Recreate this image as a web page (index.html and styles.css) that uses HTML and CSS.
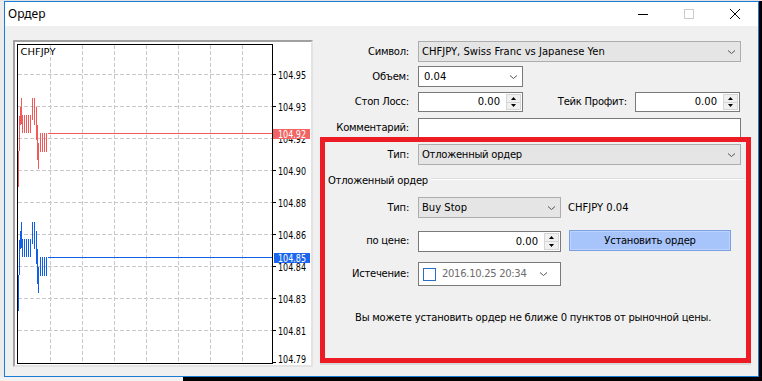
FILE: index.html
```html
<!DOCTYPE html>
<html lang="ru">
<head>
<meta charset="utf-8">
<title>Ордер</title>
<link rel="stylesheet" href="styles.css">
</head>
<body>
<div class="win">
  <div class="titlebar">
    <span class="title">Ордер</span>
    <div class="caps">
      <span class="cap"><svg width="10" height="10" viewBox="0 0 10 10"><path d="M0 5.5H10" stroke="#000" stroke-width="1"/></svg></span>
      <span class="cap"><svg width="10" height="10" viewBox="0 0 10 10"><rect x="0.5" y="0.5" width="9" height="9" fill="none" stroke="#cccccc"/></svg></span>
      <span class="cap"><svg width="10" height="10" viewBox="0 0 10 10"><path d="M0 0L10 10M10 0L0 10" stroke="#000" stroke-width="1"/></svg></span>
    </div>
  </div>
  <div class="client">
    <div class="chart">
      <svg width="296" height="323" viewBox="0 0 296 323" shape-rendering="crispEdges">
        <g stroke="#c8c8c8" stroke-dasharray="4 2" stroke-width="1">
          <path d="M35.5 3V321M67.5 3V321M99.5 3V321M131.5 3V321M163.5 3V321M195.5 3V321M227.5 3V321"/>
          <path d="M3 32.5H257M3 64.5H257M3 96.5H257M3 128.5H257M3 160.5H257M3 192.5H257M3 224.5H257M3 256.5H257M3 288.5H257"/>
        </g>
        <rect x="2.5" y="2.5" width="255" height="319" fill="none" stroke="#000"/>
        <path d="M257 32.5H261M257 64.5H261M257 96.5H261M257 128.5H261M257 160.5H261M257 192.5H261M257 224.5H261M257 256.5H261M257 288.5H261M257 320.5H261" stroke="#000"/>
        <text x="5.5" y="13" class="sym" textLength="35" lengthAdjust="spacingAndGlyphs">CHFJPY</text>
        <g class="ax">
          <text x="263" y="36.5" textLength="28" lengthAdjust="spacingAndGlyphs">104.95</text>
          <text x="263" y="68.5" textLength="28" lengthAdjust="spacingAndGlyphs">104.93</text>
          <text x="263" y="100.5" textLength="28" lengthAdjust="spacingAndGlyphs">104.92</text>
          <text x="263" y="132.5" textLength="28" lengthAdjust="spacingAndGlyphs">104.90</text>
          <text x="263" y="164.5" textLength="28" lengthAdjust="spacingAndGlyphs">104.88</text>
          <text x="263" y="196.5" textLength="28" lengthAdjust="spacingAndGlyphs">104.86</text>
          <text x="263" y="228.5" textLength="28" lengthAdjust="spacingAndGlyphs">104.84</text>
          <text x="263" y="260.5" textLength="28" lengthAdjust="spacingAndGlyphs">104.83</text>
          <text x="263" y="292.5" textLength="28" lengthAdjust="spacingAndGlyphs">104.81</text>
          <text x="263" y="321" textLength="28" lengthAdjust="spacingAndGlyphs">104.79</text>
        </g>
        <path d="M33 91.5H257" stroke="#f25a5a" stroke-width="1"/>
        <path d="M33 215.5H257" stroke="#0f5fe8" stroke-width="1"/>
        <path d="M3.5 109V145M4.5 74V109M5.5 65V83M6.5 56V82M7.5 73V91M9.5 73V91M11.5 73V91M13.5 73V91M15.5 73V91M17.5 56V78M19.5 56V83M21.5 65V98M22.5 83V118M23.5 101V127M25.5 91V110M27.5 91V110M29.5 91V110M31.5 91V110" stroke="#f25a5a" fill="none"/>
        <g transform="translate(0 124)">
          <path d="M3.5 109V145M4.5 74V109M5.5 65V83M6.5 56V82M7.5 73V91M9.5 73V91M11.5 73V91M13.5 73V91M15.5 73V91M17.5 56V78M19.5 56V83M21.5 65V98M22.5 83V118M23.5 101V127M25.5 91V110M27.5 91V110M29.5 91V110M31.5 91V110" stroke="#0f5fe8" fill="none"/>
        </g>
        <rect x="258" y="87" width="37" height="10" fill="#f26464"/>
        <text x="263" y="95.5" class="tagt" textLength="28" lengthAdjust="spacingAndGlyphs">104.92</text>
        <rect x="259" y="211" width="36" height="10" fill="#1a66ee"/>
        <text x="263" y="219.5" class="tagt" textLength="28" lengthAdjust="spacingAndGlyphs">104.85</text>
      </svg>
    </div>
    <div class="form">
      <div class="row r1">
        <span class="lbl">Символ:</span>
        <div class="combo wide"><span>CHFJPY, Swiss Franc vs Japanese Yen</span><svg class="chev" width="7" height="4" viewBox="0 0 7 4"><path d="M0 0.5L3.5 3.5L7 0.5" fill="none" stroke="#555"/></svg></div>
      </div>
      <div class="row r2">
        <span class="lbl">Объем:</span>
        <div class="combo edit short"><span>0.04</span><svg class="chev" width="7" height="4" viewBox="0 0 7 4"><path d="M0 0.5L3.5 3.5L7 0.5" fill="none" stroke="#555"/></svg></div>
      </div>
      <div class="row r3">
        <span class="lbl">Стоп Лосс:</span>
        <div class="spin short"><span class="val">0.00</span><span class="spinbtns"><span class="sb"><svg width="5" height="3" viewBox="0 0 5 3"><path d="M2.5 0L5 3H0Z"/></svg></span><span class="sb"><svg width="5" height="3" viewBox="0 0 5 3"><path d="M0 0H5L2.5 3Z"/></svg></span></span></div>
        <span class="lbl2">Тейк Профит:</span>
        <div class="spin short tp"><span class="val">0.00</span><span class="spinbtns"><span class="sb"><svg width="5" height="3" viewBox="0 0 5 3"><path d="M2.5 0L5 3H0Z"/></svg></span><span class="sb"><svg width="5" height="3" viewBox="0 0 5 3"><path d="M0 0H5L2.5 3Z"/></svg></span></span></div>
      </div>
      <div class="row r4">
        <span class="lbl">Комментарий:</span>
        <div class="text wide"></div>
      </div>
      <div class="row r5">
        <span class="lbl">Тип:</span>
        <div class="combo wide"><span class="cyr">Отложенный ордер</span><svg class="chev" width="7" height="4" viewBox="0 0 7 4"><path d="M0 0.5L3.5 3.5L7 0.5" fill="none" stroke="#555"/></svg></div>
      </div>
      <div class="group"><span class="gtitle">Отложенный ордер</span><span class="gline"></span></div>
      <div class="row r6">
        <span class="lbl">Тип:</span>
        <div class="combo mid"><span>Buy Stop</span><svg class="chev" width="7" height="4" viewBox="0 0 7 4"><path d="M0 0.5L3.5 3.5L7 0.5" fill="none" stroke="#555"/></svg></div>
        <span class="info">CHFJPY 0.04</span>
      </div>
      <div class="row r7">
        <span class="lbl">по цене:</span>
        <div class="spin mid"><span class="val">0.00</span><span class="spinbtns"><span class="sb"><svg width="5" height="3" viewBox="0 0 5 3"><path d="M2.5 0L5 3H0Z"/></svg></span><span class="sb"><svg width="5" height="3" viewBox="0 0 5 3"><path d="M0 0H5L2.5 3Z"/></svg></span></span></div>
        <button class="btn" type="button">Установить ордер</button>
      </div>
      <div class="row r8">
        <span class="lbl">Истечение:</span>
        <div class="date mid"><span class="cb"></span><span class="dtxt">2016.10.25 20:34</span><svg class="chev" width="7" height="4" viewBox="0 0 7 4"><path d="M0 0.5L3.5 3.5L7 0.5" fill="none" stroke="#555"/></svg></div>
      </div>
      <p class="note">Вы можете установить ордер не ближе 0 пунктов от рыночной цены.</p>
    </div>
  </div>
</div>
<div class="mark"></div>
</body>
</html>
```

FILE: styles.css
```css
* { box-sizing: border-box; }
html, body { margin: 0; }
body {
  width: 762px;
  height: 381px;
  overflow: hidden;
  position: relative;
  padding: 1px 0 0 4px;
  background:
    linear-gradient(#e2e2e2, #e2e2e2) 0 0 / 100% 1px no-repeat,
    linear-gradient(#ececec, #ececec) 0 0 / 4px 377px no-repeat,
    linear-gradient(#f2f2f2, #f2f2f2) 0 377px / 183px 4px no-repeat,
    #000;
  font-family: "DejaVu Sans", sans-serif;
  font-size: 10px;
  line-height: 12px;
  color: #000;
}
.win {
  width: 755px;
  height: 376px;
  border: 1px solid #1a7cd6;
  background: #f0f0f0;
  display: flex;
  flex-direction: column;
}
.titlebar {
  height: 24px;
  flex: none;
  background: #fff;
  display: flex;
  align-items: center;
}
.title {
  font-family: "Noto Sans", sans-serif;
  font-size: 12px;
  line-height: 16px;
  padding-left: 3px;
}
.caps { margin-left: auto; display: flex; height: 100%; }
.cap { width: 46px; display: flex; align-items: center; justify-content: center; }
.cap svg { display: block; }

.client { flex: 1; display: flex; padding: 14px 0 0 8px; }
.chart {
  width: 300px;
  height: 327px;
  flex: none;
  border: 2px solid;
  border-color: #a0a0a0 #e3e3e3 #e3e3e3 #a0a0a0;
  background: #fff;
}
.chart svg { display: block; }
.chart text { font-family: "DejaVu Sans", sans-serif; font-size: 10.5px; fill: #000; }
.chart text.sym { font-size: 9.5px; }
.chart text.tagt { fill: #fff; }

.form {
  margin-left: 7px;
  width: 431px;
  display: flex;
  flex-direction: column;
}
.row { display: flex; align-items: center; }
.lbl {
  width: 89px;
  flex: none;
  text-align: right;
  margin-right: 9px;
  white-space: nowrap;
  letter-spacing: -0.25px;
}
.lbl2 { margin-left: auto; margin-right: 8px; white-space: nowrap; letter-spacing: -0.25px; }
.cyr { letter-spacing: -0.25px; }
.r1 { margin-top: 1px; }
.r2 { margin-top: 4px; }
.r3 { margin-top: 5px; }
.r4 { margin-top: 6px; }
.r5 { margin-top: 6px; }
.r6 { margin-top: 10px; }
.r7 { margin-top: 12px; height: 22px; }
.r8 { margin-top: 10px; }

.wide { width: 323px; }
.short { width: 105px; }
.mid { width: 143px; }

.combo {
  height: 21px;
  border: 1px solid #adadad;
  background: #e5e5e5;
  display: flex;
  align-items: center;
  padding-left: 3px;
  white-space: nowrap;
}
.combo.edit { background: #fff; border-color: #7a7a7a; padding-left: 5px; }
.chev { display: block; margin-left: auto; margin-right: 5px; flex: none; }

.spin {
  height: 20px;
  border: 1px solid #7a7a7a;
  background: #fff;
  display: flex;
}
.spin.tp { margin-right: 11px; }
.r7 .spin { height: 21px; align-self: flex-end; }
.val { flex: 1; text-align: right; padding-right: 6px; align-self: center; }
.spinbtns {
  width: 16px;
  display: flex;
  flex-direction: column;
  padding: 1px 1px 1px 0;
}
.sb {
  flex: 1;
  display: flex;
  align-items: center;
  justify-content: center;
  background: #f0f0f0;
  border: 1px solid #d6d6d6;
}
.sb + .sb { border-top: none; }
.sb svg { display: block; fill: #000; }

.text { height: 20px; border: 1px solid #7a7a7a; background: #fff; }

.group {
  margin-top: 9px;
  height: 13px;
  display: flex;
  align-items: flex-start;
  padding-left: 8px;
}
.gtitle { white-space: nowrap; line-height: 13px; letter-spacing: -0.25px; }
.gline {
  flex: 1;
  margin: 4px 6px 0 3px;
  height: 2px;
  border-top: 1px solid #dcdcdc;
  border-bottom: 1px solid #fff;
}

.info { margin-left: 7px; white-space: nowrap; }

.btn {
  margin: 0 0 0 8px;
  align-self: flex-start;
  width: 162px;
  height: 21px;
  padding: 0;
  border: 1px solid #7b9fe4;
  background: #a7c4fb;
  box-shadow: inset 0 0 0 1px #bcd3fc;
  font: inherit;
  letter-spacing: -0.25px;
  color: #000;
}

.date {
  height: 24px;
  border: 1px solid #7a7a7a;
  background: #fff;
  display: flex;
  align-items: center;
  padding-left: 4px;
}
.cb {
  width: 13px;
  height: 13px;
  flex: none;
  border: 1px solid #2a6fc5;
  background: #fff;
}
.dtxt { margin-left: 6px; color: #6d6d6d; white-space: nowrap; letter-spacing: -0.3px; }
.date .chev { margin-right: 13px; }

.note { margin: 26px 0 0 35px; white-space: nowrap; letter-spacing: -0.22px; }

.mark {
  position: absolute;
  left: 320px;
  top: 137px;
  width: 431px;
  height: 226px;
  border: 5px solid #ed1c24;
  box-shadow: 0 2px 0 #d9d9d9;
}
```
